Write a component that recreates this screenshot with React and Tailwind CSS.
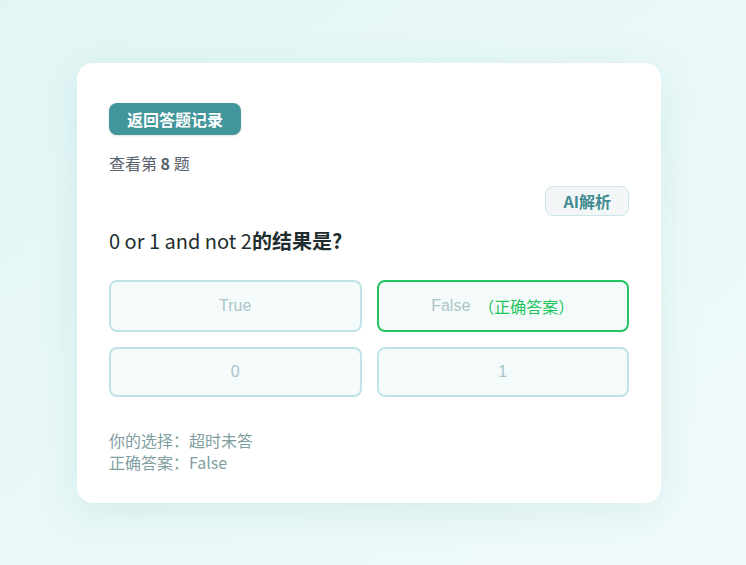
export default function App() {
  const options = [
    { label: 'True' },
    { label: 'False', correct: true },
    { label: '0' },
    { label: '1' },
  ]

  return (
    <div className="min-h-screen bg-gradient-to-br from-[#e2f5f5] to-[#f2fbfb] pt-[63px] pl-[77px]"
      style={{ fontFamily: '"Noto Sans CJK SC", "Noto Sans", sans-serif' }}>
      <div className="w-[584px] bg-white rounded-2xl shadow-[0_10px_40px_rgba(70,160,165,0.14)] px-8 pt-10 pb-[30px]">

        {/* Retour */}
        <button className="h-8 px-[18px] rounded-lg bg-[#42959a] text-white text-base font-bold leading-none shadow-sm">
          返回答题记录
        </button>

        <div className="mt-4 h-6 text-base leading-6 text-[#58626a]">
          查看第 <span className="font-bold">8</span> 题
        </div>

        <div className="flex justify-end mt-[11px]">
          <button className="h-[30px] px-[17px] rounded-lg bg-[#f3f6f7] border border-[#cbe7ea] text-[#3f8c92] text-base font-bold leading-none">
            AI解析
          </button>
        </div>

        <h2 className="mt-[11px] text-xl leading-7 font-normal text-[#1f2d2e]">
          0 or 1 and not 2<span className="font-bold">的结果是?</span>
        </h2>

        {/* Options */}
        <div className="grid grid-cols-2 gap-[15px] mt-[25px]">
          {options.map(o => (
            <div key={o.label}
              className={`flex items-center justify-center rounded-lg border-2 bg-[#f5fbfb] py-3 ${
                o.correct ? 'border-[#22c55e]' : 'border-[#bfe3e7]'
              }`}>
              <span className="text-base leading-[22px] text-[#a9c5c8]"
                style={{ fontFamily: '"Liberation Sans", Arial, sans-serif' }}>
                {o.label}
              </span>
              {o.correct && (
                <span className="ml-2 text-base leading-6 text-[#22c55e]">
                  （正确答案）
                </span>
              )}
            </div>
          ))}
        </div>

        <div className="mt-8 text-base leading-[22px] text-[#7f9ea1]">
          <div>你的选择：超时未答</div>
          <div>正确答案：False</div>
        </div>
      </div>
    </div>
  )
}
